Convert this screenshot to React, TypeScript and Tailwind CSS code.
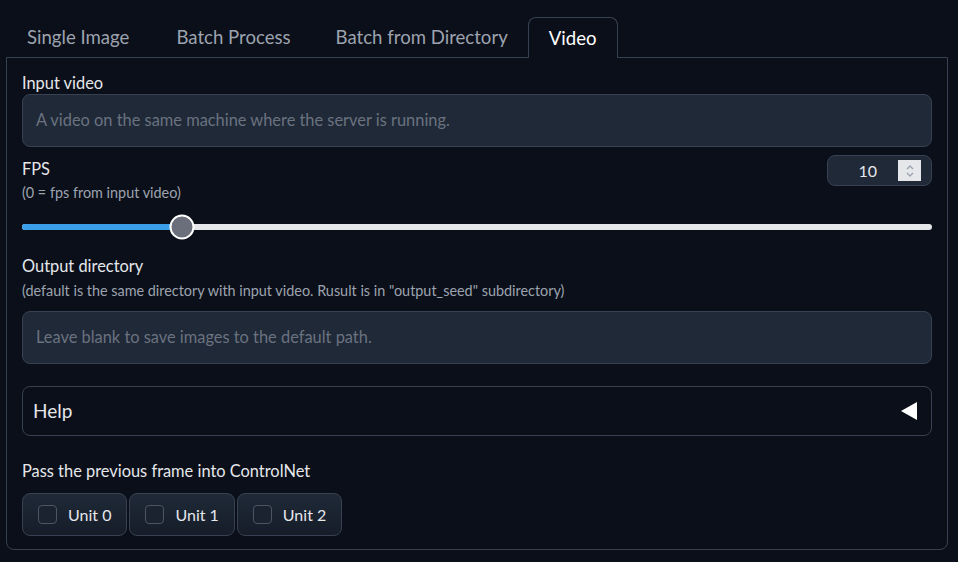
import React from "react"

const font = { fontFamily: "Lato, 'Noto Sans', sans-serif" }

function CheckUnit({ label }: { label: string }) {
  return (
    <label className="flex h-[43px] items-center gap-[11px] rounded-lg border border-[#374151] bg-gradient-to-b from-[#1f2937] to-[#161d29] px-[15px] text-[16px] text-[#e5e7eb]">
      <span className="h-[19px] w-[19px] rounded-[4px] border border-[#4b5563] bg-[#1b2230]" />
      {label}
    </label>
  )
}

export default function App() {
  const fps = 10
  const pct = ((182 - 22) / (933 - 22)) * 100

  return (
    <div className="min-h-[562px] w-full bg-[#0b0f19] pl-[6px] pr-[10px] pt-4 text-[#e5e7eb]" style={font}>
      {/* tabs */}
      <div className="flex h-[41px] items-end">
        <div className="flex items-center pl-[21px] text-[18.6px] text-[#9ca3af]">
          <span className="pb-[5px]">Single Image</span>
          <span className="pb-[5px] pl-[47px]">Batch Process</span>
          <span className="pb-[5px] pl-[45px]">Batch from Directory</span>
        </div>
        <div className="-mb-px ml-[20px] flex h-[41px] items-center rounded-t-lg border border-b-0 border-[#374151] bg-[#0b0f19] px-[20px] pt-[2px] text-[18.6px] text-white">
          Video
        </div>
      </div>

      <div className="rounded-b-lg border border-[#374151] px-[15px] pb-[13px] pt-[15px]">
        <div className="text-[16.4px] leading-5">Input video</div>
        <div className="mt-[1px] flex h-[53px] items-center rounded-lg border border-[#374151] bg-[#1f2937] px-[13px] text-[16.4px] text-[#6b7280]">
          A video on the same machine where the server is running.
        </div>

        <div className="mt-[8px] flex items-start justify-between">
          <div>
            <div className="mt-[4px] text-[16.4px] leading-5">FPS</div>
            <div className="mt-[4px] text-[14.4px] leading-5 text-[#9ca3af]">(0 = fps from input video)</div>
          </div>
          <div className="flex h-[31px] w-[105px] items-center justify-end rounded-lg border border-[#374151] bg-[#1f2937] pr-[10px]">
            <span className="mr-[21px] text-[16px]">{fps}</span>
            <span className="flex h-[21px] w-[23px] flex-col items-center justify-center bg-[#e5e7eb]">
              <svg width="10" height="16" viewBox="0 0 10 16" fill="none" stroke="#9ca3af" strokeWidth="1.4">
                <path d="M2 6 L5 3 L8 6" />
                <path d="M2 10 L5 13 L8 10" />
              </svg>
            </span>
          </div>
        </div>

        <div className="relative mt-[21px] h-[6px] rounded-full bg-[#e5e7eb]">
          <div className="h-full rounded-full bg-[#3b9ee8]" style={{ width: `${pct}%` }} />
          <div
            className="absolute top-1/2 h-[25px] w-[25px] -translate-x-1/2 -translate-y-1/2 rounded-full border-2 border-white bg-[#6b6e7b]"
            style={{ left: `${pct}%` }}
          />
        </div>

        <div className="mt-[26px] text-[16.4px] leading-5">Output directory</div>
        <div className="mt-[5px] text-[14.4px] leading-5 text-[#9ca3af]">
          (default is the same directory with input video. Rusult is in "output_seed" subdirectory)
        </div>
        <div className="mt-[10px] flex h-[53px] items-center rounded-lg border border-[#374151] bg-[#1f2937] px-[13px] text-[16.4px] text-[#6b7280]">
          Leave blank to save images to the default path.
        </div>

        <div className="mt-[22px] flex h-[50px] items-center justify-between rounded-lg border border-[#374151] px-[10px]">
          <span className="text-[19px]">Help</span>
          <svg width="16" height="18" viewBox="0 0 16 18" className="mr-[4px]">
            <path d="M16 0 L16 18 L0 9 Z" fill="white" />
          </svg>
        </div>

        <div className="mt-[25px] text-[16.4px] leading-5">Pass the previous frame into ControlNet</div>
        <div className="mt-[12px] flex gap-[2px]">
          <CheckUnit label="Unit 0" />
          <CheckUnit label="Unit 1" />
          <CheckUnit label="Unit 2" />
        </div>
      </div>
    </div>
  )
}
